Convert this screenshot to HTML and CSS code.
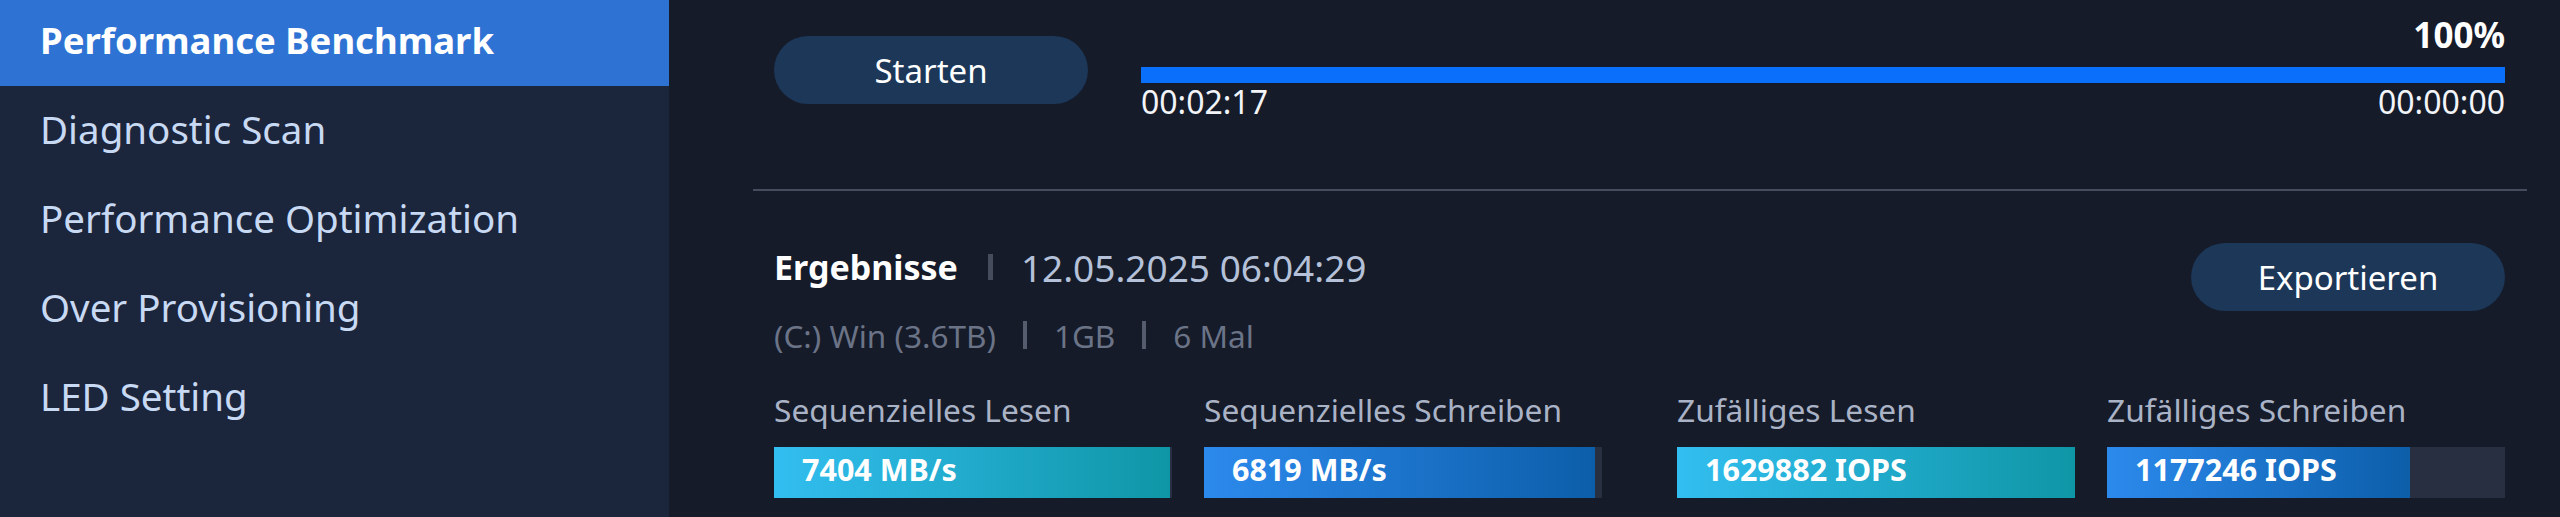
FILE: index.html
```html
<!DOCTYPE html>
<html lang="de">
<head>
    <meta charset="UTF-8">
    <title>Performance Benchmark</title>
    <link rel="stylesheet" href="styles.css">
</head>
<body>
    <div class="app">
        <nav class="sidebar">
            <a class="nav-item active">Performance Benchmark</a>
            <a class="nav-item">Diagnostic Scan</a>
            <a class="nav-item">Performance Optimization</a>
            <a class="nav-item">Over Provisioning</a>
            <a class="nav-item">LED Setting</a>
        </nav>

        <main class="main">
            <section class="run">
                <button class="pill run-btn">Starten</button>
                <div class="progress">
                    <div class="progress-pct">100%</div>
                    <div class="progress-track"><div class="progress-fill" style="width:100%"></div></div>
                    <div class="progress-times">
                        <span>00:02:17</span>
                        <span>00:00:00</span>
                    </div>
                </div>
            </section>

            <hr class="divider">

            <section class="results">
                <div class="results-head">
                    <div class="results-info">
                        <div class="results-title">
                            <strong>Ergebnisse</strong>
                            <span class="sep"></span>
                            <span class="date">12.05.2025 06:04:29</span>
                        </div>
                        <div class="results-meta">
                            <span>(C:) Win (3.6TB)</span>
                            <span class="sep"></span>
                            <span>1GB</span>
                            <span class="sep"></span>
                            <span>6 Mal</span>
                        </div>
                    </div>
                    <button class="pill export-btn">Exportieren</button>
                </div>

                <div class="metrics">
                    <div class="metric-group">
                        <div class="metric">
                            <div class="metric-label">Sequenzielles Lesen</div>
                            <div class="metric-track">
                                <div class="metric-fill read" style="width:99.5%"><span>7404 MB/s</span></div>
                            </div>
                        </div>
                        <div class="metric">
                            <div class="metric-label">Sequenzielles Schreiben</div>
                            <div class="metric-track">
                                <div class="metric-fill write" style="width:98.2%"><span>6819 MB/s</span></div>
                            </div>
                        </div>
                    </div>
                    <div class="metric-group">
                        <div class="metric">
                            <div class="metric-label">Zufälliges Lesen</div>
                            <div class="metric-track">
                                <div class="metric-fill read" style="width:100%"><span>1629882 IOPS</span></div>
                            </div>
                        </div>
                        <div class="metric">
                            <div class="metric-label">Zufälliges Schreiben</div>
                            <div class="metric-track">
                                <div class="metric-fill write" style="width:76.1%"><span>1177246 IOPS</span></div>
                            </div>
                        </div>
                    </div>
                </div>
            </section>
        </main>
    </div>
</body>
</html>
```

FILE: styles.css
```css
* {
    margin: 0;
    padding: 0;
    box-sizing: border-box;
}
html, body {
    height: 100%;
    overflow: hidden;
}
body {
    background: #151b29;
    color: #fff;
    font-family: "Noto Sans", "Liberation Sans", sans-serif;
}
.app {
    display: flex;
    height: 100%;
}

/* sidebar */
.sidebar {
    width: 669px;
    flex: none;
    background: #1b253b;
    display: flex;
    flex-direction: column;
    gap: 3px;
}
.nav-item {
    height: 86px;
    display: flex;
    align-items: center;
    padding: 0 0 7px 40px;
    font-size: 38.5px;
    color: #c8d9f3;
    cursor: pointer;
}
.nav-item.active {
    padding-bottom: 6px;
    background: #2e73d3;
    color: #fff;
    font-size: 36.5px;
    font-weight: 700;
}

/* main */
.main {
    flex: 1;
    padding: 0 55px 0 105px;
}
.pill {
    width: 314px;
    height: 68px;
    border: none;
    border-radius: 34px;
    background: #1c3758;
    color: #fff;
    font-family: inherit;
    font-size: 33px;
    cursor: pointer;
}

.run {
    display: flex;
    align-items: flex-start;
    gap: 53px;
}
.run-btn {
    margin-top: 36px;
    flex: none;
}
.progress {
    flex: 1;
    padding-top: 15px;
}
.progress-pct {
    height: 40px;
    line-height: 40px;
    text-align: right;
    font-size: 35px;
    font-weight: 700;
}
.progress-track {
    margin-top: 12px;
    height: 16px;
}
.progress-fill {
    height: 100%;
    background: #0a70fb;
}
.progress-times {
    margin-top: 1px;
    display: flex;
    justify-content: space-between;
    height: 36px;
    line-height: 36px;
    font-size: 32px;
    color: #f2f4f8;
}

.divider {
    border: none;
    height: 2px;
    background: #464c5d;
    margin: 69px -22px 0 -21px;
}

/* results */
.results-head {
    display: flex;
    justify-content: space-between;
    align-items: flex-start;
}
.results-title {
    margin-top: 54px;
    display: flex;
    align-items: center;
    height: 44px;
    font-size: 37px;
}
.results-title strong {
    font-weight: 700;
    font-size: 34px;
}
.results-title .sep {
    width: 5px;
    height: 26px;
    background: #454c5c;
    margin: 0 28px 0 30px;
}
.date {
    color: #b4c1d8;
}
.results-meta {
    margin-top: 26px;
    display: flex;
    align-items: center;
    height: 40px;
    font-size: 31.5px;
    color: #6b7387;
}
.results-meta .sep {
    width: 4px;
    height: 28px;
    background: #555c6d;
    margin: 0 27px;
}
.export-btn {
    margin-top: 52px;
}

.metrics {
    margin-top: 37px;
    display: flex;
    gap: 75px;
}
.metric-group {
    flex: 1;
    display: flex;
    gap: 32px;
}
.metric {
    flex: 1;
}
.metric-label {
    height: 36px;
    line-height: 36px;
    font-size: 31.7px;
    color: #aab3c6;
    white-space: nowrap;
}
.metric-track {
    margin-top: 19px;
    height: 51px;
    background: #282f41;
}
.metric-fill {
    height: 100%;
    display: flex;
    align-items: center;
    padding: 0 0 8px 28px;
    font-size: 30.5px;
    font-weight: 700;
    white-space: nowrap;
}
.metric-fill.read {
    background: linear-gradient(90deg, #32bef0, #0f96a6);
}
.metric-fill.write {
    background: linear-gradient(90deg, #2c8aed, #0c5ea9);
}
```
